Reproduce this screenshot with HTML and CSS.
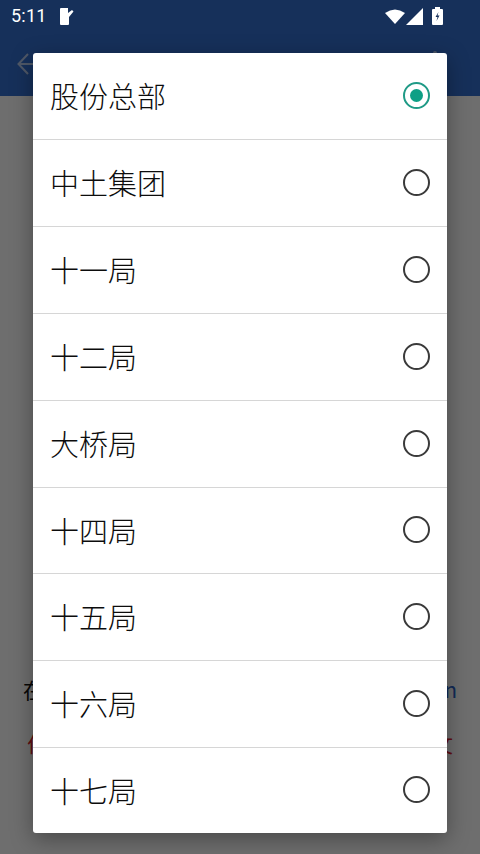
FILE: index.html
```html
<!DOCTYPE html>
<html lang="zh">
<head>
<meta charset="utf-8">
<title>选择单位</title>
<link rel="stylesheet" href="styles.css">
</head>
<body>
<div class="page">
  <header class="appbar">
    <div class="status">
      <span class="time">5:11</span>
      <svg class="sim" width="14" height="17" viewBox="0 0 14 17"><path d="M0 1q0-1 1-1h7v5l4-3 1.500 1.500L9 9v7q0 1-1 1H1q-1 0-1-1z" fill="#fff"/></svg>
      <span class="spacer"></span>
      <svg class="wifi" width="20" height="15" viewBox="0 0 20 15"><path d="M0 4Q10-3 20 4L10 15z" fill="#fff"/></svg>
      <svg class="signal" width="17" height="17" viewBox="0 0 17 17"><path d="M17 0v17H0z" fill="#fff"/></svg>
      <svg class="battery" width="11" height="18" viewBox="0 0 11 18"><path fill-rule="evenodd" d="M3 0h5v2h2q1 0 1 1v14q0 1-1 1H1q-1 0-1-1V3q0-1 1-1h2zM6.500 5 3.500 10h2L4.500 14l3-5.500h-2z" fill="#fff"/></svg>
    </div>
    <div class="toolbar">
      <svg class="back" width="20" height="22" viewBox="0 0 20 22"><path d="M11 1 1.500 11 11 21M2 11h18" fill="none" stroke="#fff" stroke-width="2"/></svg>
      <span class="menu-dot"></span>
    </div>
  </header>
  <main class="content">
    <p class="line line-dark"><span>在</span><span class="link">n</span></p>
    <p class="line line-red"><span>位</span><span>文</span></p>
  </main>
  <div class="scrim"></div>
  <div class="dialog">
    <div class="row"><span>股份总部</span><span class="radio checked"></span></div>
    <div class="row"><span>中土集团</span><span class="radio"></span></div>
    <div class="row"><span>十一局</span><span class="radio"></span></div>
    <div class="row"><span>十二局</span><span class="radio"></span></div>
    <div class="row"><span>大桥局</span><span class="radio"></span></div>
    <div class="row"><span>十四局</span><span class="radio"></span></div>
    <div class="row"><span>十五局</span><span class="radio"></span></div>
    <div class="row"><span>十六局</span><span class="radio"></span></div>
    <div class="row"><span>十七局</span><span class="radio"></span></div>
  </div>
</div>
</body>
</html>
```
FILE: styles.css
```css
html, body { margin: 0; padding: 0; }
body { width: 480px; height: 854px; overflow: hidden; font-family: "Noto Sans CJK SC", "Noto Sans", sans-serif; }
.page { position: relative; width: 480px; height: 854px; background: #fff; overflow: hidden; display: flex; flex-direction: column; }
.appbar { height: 96px; background: #3570d0; flex: none; }
.status { position: relative; z-index: 2; height: 32px; display: flex; align-items: center; padding: 0 37px 0 11px; color: #fff; }
.time { font: 400 18px/20px Roboto, sans-serif; letter-spacing: 0.2px; margin-right: 13px; }
.spacer { flex: 1; }
.wifi { margin-right: 1px; }
.signal { margin-right: 9px; }
.toolbar { height: 64px; display: flex; align-items: flex-start; justify-content: space-between; padding: 21px 43px 0 17px; }
.back { display: block; opacity: 0.65; }
.menu-dot { width: 4px; height: 4px; border-radius: 50%; background: #fff; margin-top: -2px; opacity: .6; }
.content { flex: 1; padding: 578px 23px 0 23px; }
.line { margin: 0; display: flex; justify-content: space-between; font-size: 21px; line-height: 30px; height: 54px; }
.line-dark { color: #111; }
.link { color: #2b63c8; }
.line-red { color: #e0202a; padding: 0 4px; }
.scrim { position: absolute; inset: 0; background: rgba(0, 0, 0, 0.57); }
.dialog { position: absolute; left: 33px; top: 53px; width: 414px; height: 780px; background: #fff; border-radius: 3px; box-shadow: 0 6px 22px rgba(0, 0, 0, 0.35); display: grid; grid-template-rows: repeat(5, 87px) 86px repeat(2, 87px) 85px; }
.row { display: flex; align-items: center; justify-content: space-between; padding: 0 17px 2px; border-bottom: 1px solid #d6d6d6; font-size: 29px; font-weight: 300; line-height: 40px; color: #0c0c0c; box-sizing: border-box; }
.row:last-child { border-bottom: 0; }
.radio { width: 27px; height: 27px; box-sizing: border-box; border: 2.600px solid #3a3a3a; border-radius: 50%; flex: none; display: flex; align-items: center; justify-content: center; }
.radio.checked { border-color: #1f9a86; }
.radio.checked::after { content: ""; width: 13px; height: 13px; border-radius: 50%; background: #0e9f85; }
```
